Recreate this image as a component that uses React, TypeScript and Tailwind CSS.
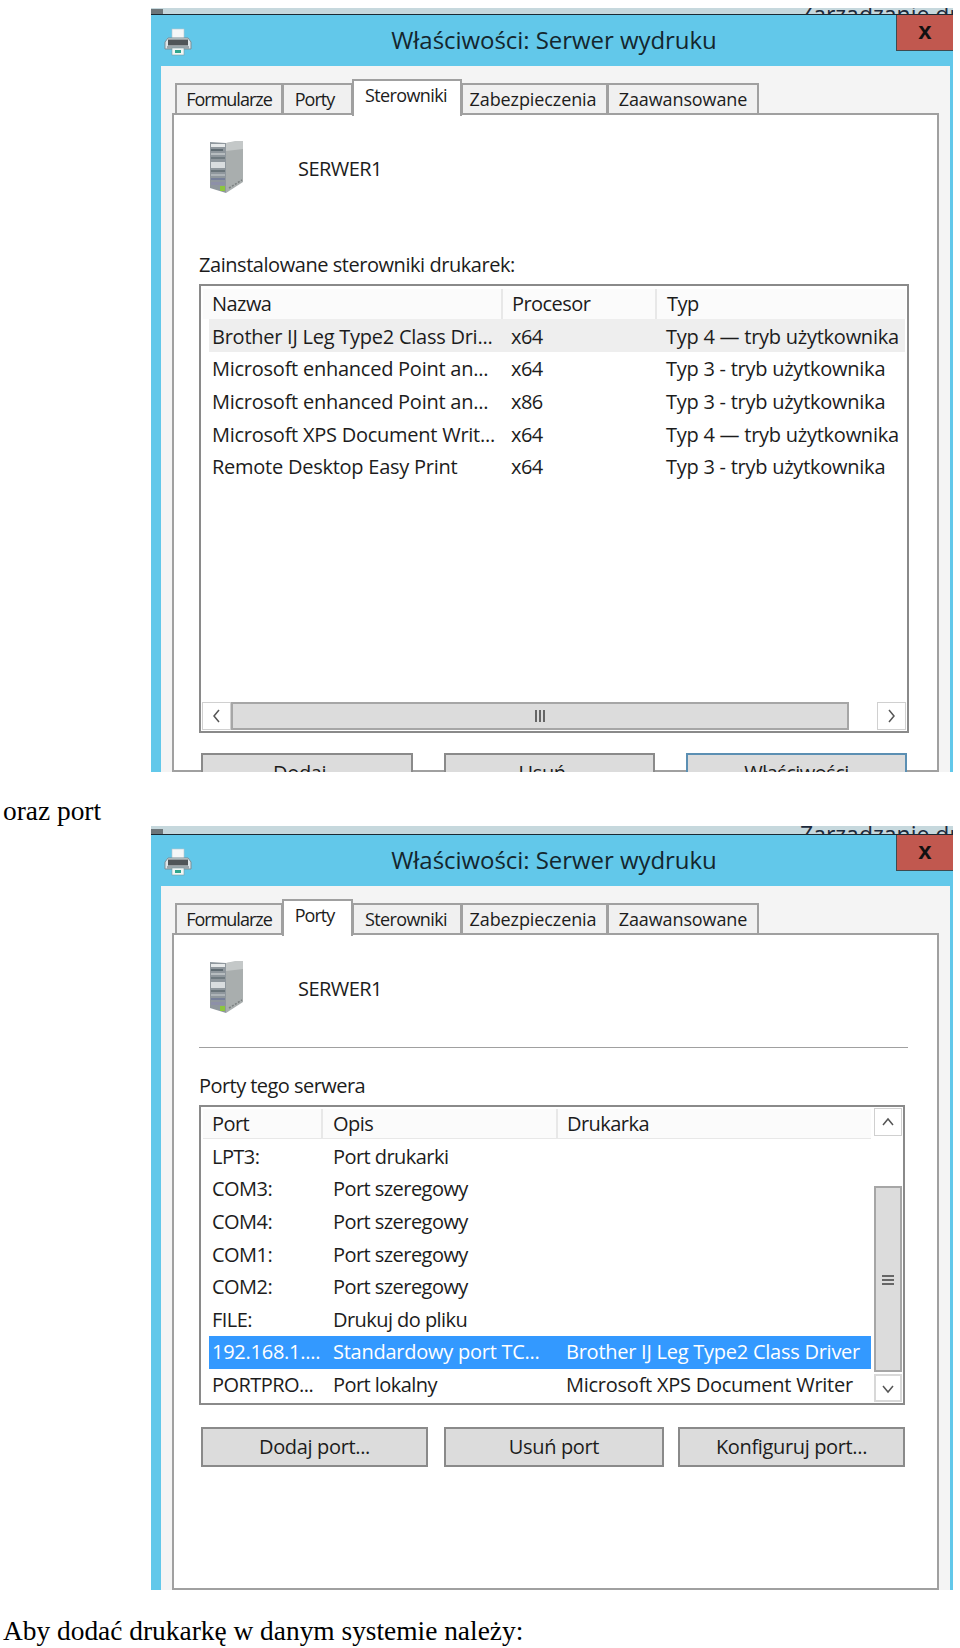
import React from "react";

const f = "font-['Open_Sans',sans-serif] leading-none";
const ui = `${f} text-[20px] text-[#1c1c1c] tracking-[-0.55px]`;
const uiLabel = `${f} text-[20px] text-[#1c1c1c] tracking-[-0.45px]`;
const uiWide = `${f} text-[20px] text-[#1c1c1c] tracking-[-0.25px]`;
const uiWideWhite = `${f} text-[20px] text-white tracking-[-0.25px]`;
const uiTab = `${f} text-[18px] text-[#1c1c1c]`;
const uiTitle = `${f} text-[24px] text-[#14262e] tracking-[-0.05px]`;

function PrinterIcon() {
  return (
    <svg width="28" height="28" viewBox="0 0 28 28" className="shrink-0 blur-[0.3px]">
      <rect x="8" y="1" width="12" height="10" fill="#f4f7f8" stroke="#b9c6cc" strokeWidth="0.6" />
      <path d="M4 10 L24 10 L27 14 L27 21 L1 21 L1 14 Z" fill="#dfe6e9" stroke="#7d8d94" />
      <rect x="4" y="11.5" width="20" height="6" fill="#4f5558" />
      <rect x="3" y="18" width="22" height="3" fill="#9aa6ab" />
      <rect x="8" y="20" width="12" height="7" fill="#f2f7f6" stroke="#7f9aa0" strokeWidth="0.6" />
      <rect x="11" y="22" width="6" height="3" fill="#2fa58e" />
    </svg>
  );
}

function ServerIcon() {
  return (
    <svg width="33" height="53" viewBox="0 0 33 53" className="shrink-0 blur-[0.5px]">
      <polygon points="16,3 33,1 33,42 16,53" fill="#a9aeae" />
      <polygon points="16,3 25,1 33,1 33,9 16,11" fill="#c4c8c8" />
      <polygon points="0,2 16,3 16,53 0,48" fill="#8f979d" />
      <rect x="1" y="4" width="14" height="3" fill="#e6e9ea" />
      <rect x="1" y="9" width="12" height="2" fill="#5f6b72" />
      <rect x="1" y="13" width="14" height="2" fill="#b7bdc0" />
      <rect x="1" y="17" width="14" height="2" fill="#6f7a80" />
      <rect x="1" y="22" width="14" height="6" fill="#d9dddf" />
      <rect x="1" y="30" width="14" height="2" fill="#6a757b" />
      <rect x="1" y="34" width="14" height="2" fill="#aeb4b8" />
      <rect x="1" y="38" width="14" height="2" fill="#767f9a" />
      <rect x="1" y="42" width="14" height="3" fill="#8d90a8" />
      <rect x="10" y="46" width="5" height="5" fill="#8cc63f" />
      <path d="M19 48 L32 40" stroke="#7b8080" strokeWidth="1.5" strokeDasharray="2 1.5" />
    </svg>
  );
}

function Chevron({ dir }: { dir: "left" | "right" | "up" | "down" }) {
  const pts = {
    left: "8,2 3,8 8,14",
    right: "3,2 8,8 3,14",
    up: "2,9 7,3 12,9",
    down: "2,4 7,10 12,4",
  }[dir];
  const small = dir === "up" || dir === "down";
  return (
    <svg width={small ? 14 : 11} height={small ? 13 : 16} viewBox={small ? "0 0 14 13" : "0 0 11 16"}>
      <polyline points={pts} fill="none" stroke="#555" strokeWidth="1.5" />
    </svg>
  );
}

function Dialog({ active, stripClass, stripTextClass, children }: { active: string; stripClass: string; stripTextClass: string; children: React.ReactNode }) {
  const tabs = [
    ["Formularze", "w-[108px] tracking-[-1px]"],
    ["Porty", "w-[71px] pr-[6px] tracking-[-1px]"],
    ["Sterowniki", "w-[110px] pr-[2px] tracking-[-0.6px]"],
    ["Zabezpieczenia", "w-[147px] pr-[3px] tracking-[-0.1px]"],
    ["Zaawansowane", "w-[152px] tracking-[-0.1px]"],
  ];
  return (
    <div className="ml-[151px] w-[802px] h-[764px] shrink-0 overflow-hidden flex flex-col bg-[#62c8ea]">
      <div className={`${stripClass} shrink-0 bg-[#c6d8dd] overflow-hidden flex`}>
        <div className="w-[12px] shrink-0 h-[5px] mt-auto bg-[#6d767a]" />
        <div className={`ml-[637px] shrink-0 whitespace-nowrap font-['Open_Sans',sans-serif] text-[23px] leading-[23px] text-[#1c2a3c] ${stripTextClass}`}>Zarządzanie drukarkami</div>
      </div>
      <div className="h-px shrink-0 bg-[#1c2a33]" />
      <div className="h-[51px] shrink-0 relative flex items-center">
        <div className="ml-[13px] mt-[2px]"><PrinterIcon /></div>
        <div className={`${uiTitle} flex-1 text-center pl-[8px] pr-[45px] mb-[2px]`}>Właściwości: Serwer wydruku</div>
        <div className="absolute right-0 top-0 w-[57px] h-[36px] bg-[#c1584f] border-l border-b border-[#3d4a50] flex items-center justify-center font-['Liberation_Sans',sans-serif] font-bold text-[24px] leading-none text-[#111] pb-[4px]">x</div>
      </div>
      <div className="flex-1 ml-[10px] mr-[3px] bg-[#f4f4f4] pt-[13px] px-[11px] flex flex-col min-h-0">
        <div className="h-[34px] shrink-0 flex items-end pl-[3px]">
          {tabs.map(([t, w]) =>
            t === active ? (
              <div key={t} className={`${w} ${uiTab} h-[37px] -mb-[3px] -mr-px relative z-10 border-2 border-b-0 border-[#a0a0a0] bg-white text-center pt-[5px]`}>{t}</div>
            ) : (
              <div key={t} className={`${w} ${uiTab} h-[30px] -mr-px border-2 border-b-0 border-[#a0a0a0] bg-[#f0f0f0] text-center pt-[5px]`}>{t}</div>
            )
          )}
        </div>
        <div className="flex-1 min-h-0 border-2 border-[#a0a0a0] bg-white pl-[25px] pt-[25px]">
          <div className="h-[53px] flex items-center pl-[11px]">
            <ServerIcon />
            <div className={`${ui} ml-[55px] mt-[5px]`}>SERWER1</div>
          </div>
          {children}
        </div>
      </div>
    </div>
  );
}

function Btn({ label, cls }: { label: string; cls: string }) {
  return (
    <div className={`${cls} h-[40px] shrink-0 bg-[#dcdcdc] border-2 border-[#8a8a8a] flex items-center justify-center`}>
      <span className={`${f} text-[20px] text-[#1c1c1c] tracking-[-0.35px]`}>{label}</span>
    </div>
  );
}

const drivers = [
  ["Brother IJ Leg Type2 Class Dri...", "x64", "Typ 4 — tryb użytkownika"],
  ["Microsoft enhanced Point an...", "x64", "Typ 3 - tryb użytkownika"],
  ["Microsoft enhanced Point an...", "x86", "Typ 3 - tryb użytkownika"],
  ["Microsoft XPS Document Writ...", "x64", "Typ 4 — tryb użytkownika"],
  ["Remote Desktop Easy Print", "x64", "Typ 3 - tryb użytkownika"],
];

const ports = [
  ["LPT3:", "Port drukarki", ""],
  ["COM3:", "Port szeregowy", ""],
  ["COM4:", "Port szeregowy", ""],
  ["COM1:", "Port szeregowy", ""],
  ["COM2:", "Port szeregowy", ""],
  ["FILE:", "Drukuj do pliku", ""],
  ["192.168.1....", "Standardowy port TC...", "Brother IJ Leg Type2 Class Driver"],
  ["PORTPRO...", "Port lokalny", "Microsoft XPS Document Writer"],
];

function DriversTab() {
  return (
    <div>
      <div className={`${uiLabel} h-[30px] mt-[57px] flex items-center`}>Zainstalowane sterowniki drukarek:</div>
      <div className="mt-[4px] w-[710px] h-[449px] border-2 border-[#8a8a8a] flex flex-col">
        <div className="mt-[3px] ml-[2px] mr-[1px] h-[30px] shrink-0 flex bg-[#fbfbfb]">
          <div className={`${ui} w-[300px] pl-[9px] flex items-center border-r-2 border-[#e8e8e8]`}>Nazwa</div>
          <div className={`${ui} w-[154px] pl-[9px] flex items-center border-r-2 border-[#e8e8e8]`}>Procesor</div>
          <div className={`${ui} flex-1 pl-[10px] flex items-center`}>Typ</div>
        </div>
        <div className="ml-[8px] mr-[2px] flex flex-col">
          {drivers.map((r, i) => (
            <div key={i} className={`${i === 0 ? "bg-[#eeeeee]" : ""} h-[32.6px] pt-[3px] grid grid-cols-[299px_155px_1fr] pl-[3px] items-center whitespace-nowrap`}>
              {r.map((c, j) => <div key={j} className={j === 1 ? ui : uiWide}>{c}</div>)}
            </div>
          ))}
        </div>
        <div className="mt-auto mb-[1px] mx-[1px] h-[28px] shrink-0 flex">
          <div className="w-[29px] border border-[#d0d0d0] flex items-center justify-center"><Chevron dir="left" /></div>
          <div className="w-[618px] bg-[#dcdcdc] border-2 border-[#a6a6a6] flex items-center justify-center gap-[2px]">
            <div className="w-[2px] h-[12px] bg-[#666]" />
            <div className="w-[2px] h-[12px] bg-[#666]" />
            <div className="w-[2px] h-[12px] bg-[#666]" />
          </div>
          <div className="w-[28px]" />
          <div className="w-[29px] border border-[#d0d0d0] flex items-center justify-center"><Chevron dir="right" /></div>
        </div>
      </div>
      <div className="mt-[20px] pl-[2px] flex">
        <Btn label="Dodaj..." cls="w-[212px]" />
        <Btn label="Usuń..." cls="w-[211px] ml-[31px]" />
        <div className="ml-[31px] w-[221px] shrink-0 h-[40px] bg-[#dcdcdc] border-2 border-[#5b8fb3] flex items-center justify-center">
          <span className={ui}>Właściwości</span>
        </div>
      </div>
    </div>
  );
}

function PortsTab() {
  return (
    <div>
      <div className="mt-[34px] w-[709px] h-px bg-[#a0a0a0]" />
      <div className={`${ui} h-[30px] mt-[23px] flex items-center`}>Porty tego serwera</div>
      <div className="mt-[4px] w-[706px] h-[300px] border-2 border-[#8a8a8a] flex">
        <div className="w-[668px] ml-[2px] pt-[2px] shrink-0">
          <div className="h-[30px] flex bg-[#fbfbfb] border-b border-[#e8e8e8]">
            <div className={`${ui} w-[120px] pl-[9px] flex items-center border-r-2 border-[#e8e8e8]`}>Port</div>
            <div className={`${ui} w-[235px] pl-[10px] flex items-center border-r-2 border-[#e8e8e8]`}>Opis</div>
            <div className={`${ui} flex-1 pl-[9px] flex items-center`}>Drukarka</div>
          </div>
          <div className="mt-[1.5px] ml-[6px] flex flex-col">
            {ports.map((r, i) => (
              <div key={i} className={`${i === 6 ? "bg-[#3399ff]" : ""} h-[32.6px] grid grid-cols-[121px_233px_1fr] pl-[3px] items-center whitespace-nowrap overflow-hidden`}>
                {r.map((c, j) => {
                  const wide = j === 2 || i === 6;
                  return <div key={j} className={i === 6 ? uiWideWhite : wide ? uiWide : ui}>{c}</div>;
                })}
              </div>
            ))}
          </div>
        </div>
        <div className="ml-[3px] mt-[1px] w-[28px] h-[294px] shrink-0 flex flex-col">
          <div className="h-[28px] shrink-0 border border-[#d0d0d0] flex items-center justify-center"><Chevron dir="up" /></div>
          <div className="h-[50px] shrink-0" />
          <div className="h-[186px] shrink-0 bg-[#dcdcdc] border-2 border-[#a6a6a6] flex flex-col items-center justify-center gap-[2px] pt-[2px]">
            <div className="w-[12px] h-[2px] bg-[#666]" />
            <div className="w-[12px] h-[2px] bg-[#666]" />
            <div className="w-[12px] h-[2px] bg-[#666]" />
          </div>
          <div className="h-[2px] shrink-0" />
          <div className="h-[28px] shrink-0 border-2 border-[#d8d8d8] flex items-center justify-center"><Chevron dir="down" /></div>
        </div>
      </div>
      <div className="mt-[22px] pl-[2px] flex">
        <Btn label="Dodaj port..." cls="w-[227px]" />
        <Btn label="Usuń port" cls="w-[220px] ml-[16px]" />
        <Btn label="Konfiguruj port..." cls="w-[227px] ml-[14px]" />
      </div>
    </div>
  );
}

export default function App() {
  const para = "font-['Liberation_Serif',serif] text-[27.4px] leading-[30px] text-black pl-[3px] whitespace-nowrap";
  return (
    <div className="w-[960px] h-[1648px] overflow-hidden bg-white flex flex-col pt-[8px]">
      <Dialog active="Sterowniki" stripClass="h-[6px]" stripTextClass="-mt-[5px]"><DriversTab /></Dialog>
      <p className={`${para} mt-[24px]`}>oraz port</p>
      <Dialog active="Porty" stripClass="h-[8px]" stripTextClass="-mt-[3px]"><PortsTab /></Dialog>
      <p className={`${para} mt-[26px]`}>Aby dodać drukarkę w danym systemie należy:</p>
    </div>
  );
}
